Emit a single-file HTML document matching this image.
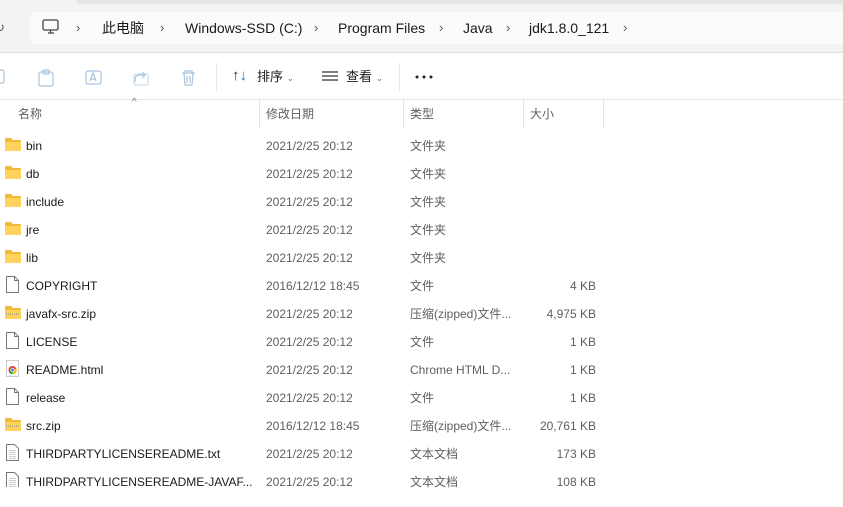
<!DOCTYPE html>
<html><head><meta charset="utf-8"><style>
*{margin:0;padding:0;box-sizing:border-box}
body{width:843px;height:507px;overflow:hidden;background:#fff;font-family:"Liberation Sans","Noto Sans CJK SC",sans-serif;position:relative;color:#1a1a1a}
.top{position:absolute;left:0;top:0;width:843px;height:53px;background:#f3f3f3;border-bottom:1px solid #e0e0e0}
.tab{position:absolute;left:76px;top:0;width:767px;height:4px;background:#e6e6e6;border-radius:0 0 0 4px}
.addr{position:absolute;left:30px;top:12px;width:830px;height:32px;background:#fbfbfb;border-radius:5px}
.t{position:absolute;white-space:nowrap;font-size:13px;line-height:16px}
.g{color:#5f5f5f;font-size:12px}
.sep{position:absolute;top:100px;width:1px;height:27px;background:#e5e5e5}
.tb{position:absolute;left:0;top:53px;width:843px;height:47px;border-bottom:1px solid #e5e5e5}
.vs{position:absolute;top:63px;width:1px;height:28px;background:#e5e5e5}
.row .t{font-size:12px}
</style></head><body>
<div class="top"><div class="tab"></div><div class="addr"></div></div>
<div class="t" style="left:-6px;top:20px;color:#555">↻</div>
<svg style="position:absolute;left:42px;top:19px" width="18" height="16" viewBox="0 0 18 16"><rect x="1" y="1" width="15" height="10" rx="1.5" fill="none" stroke="#444" stroke-width="1.3"/><path d="M6 14h6M8.5 11v3" stroke="#444" stroke-width="1.3"/></svg>
<div class="t" style="left:76px;top:20px;color:#555">›</div>
<div class="t" style="left:102px;top:20px;font-size:14px">此电脑</div>
<div class="t" style="left:160px;top:20px;color:#555">›</div>
<div class="t" style="left:185px;top:20px;font-size:14px">Windows-SSD (C:)</div>
<div class="t" style="left:314px;top:20px;color:#555">›</div>
<div class="t" style="left:338px;top:20px;font-size:14px">Program Files</div>
<div class="t" style="left:439px;top:20px;color:#555">›</div>
<div class="t" style="left:463px;top:20px;font-size:14px">Java</div>
<div class="t" style="left:506px;top:20px;color:#555">›</div>
<div class="t" style="left:529px;top:20px;font-size:14px">jdk1.8.0_121</div>
<div class="t" style="left:623px;top:20px;color:#555">›</div>
<div class="tb"></div>
<svg style="position:absolute;left:0;top:68px" width="200" height="20" viewBox="0 0 200 20" fill="none" stroke="#a9c4de" stroke-width="1.2">
<rect x="-6" y="2" width="10" height="13" rx="2"/>
<rect x="39" y="4" width="14" height="14" rx="2"/><rect x="43" y="2" width="6" height="4" rx="1"/>
<rect x="86" y="3" width="15" height="13" rx="2"/><path d="M90 13l3-8 3 8M91 11h4"/>
<path d="M135 14v-3a4 4 0 0 1 4-4h6M142 4l3 3-3 3"/><rect x="134" y="6" width="14" height="11" rx="2" stroke-opacity=".6"/>
<path d="M182 5h13M185 5v-2h7v2M184 5l1 12h7l1-12M187 8v7M190 8v7"/></svg>
<div class="vs" style="left:216px"></div>
<div class="t" style="left:232px;top:68px;font-size:15px;color:#333">↑<span style="color:#1e6fc6">↓</span></div>
<div class="t" style="left:257px;top:69px">排序 <span style="font-size:9px;color:#777">⌄</span></div>
<svg style="position:absolute;left:322px;top:71px" width="16" height="12"><path d="M0 1h16M0 5h16M0 9h16" stroke="#333" stroke-width="1.2"/></svg>
<div class="t" style="left:346px;top:69px">查看 <span style="font-size:9px;color:#777">⌄</span></div>
<div class="vs" style="left:399px"></div>
<svg style="position:absolute;left:415px;top:75px" width="20" height="4"><circle cx="2" cy="2" r="1.5" fill="#222"/><circle cx="9" cy="2" r="1.5" fill="#222"/><circle cx="16" cy="2" r="1.5" fill="#222"/></svg>
<div class="t" style="left:132px;top:95px;font-size:10px;color:#777">^</div>
<div class="t g" style="left:18px;top:106px">名称</div>
<div class="sep" style="left:259px"></div>
<div class="t g" style="left:266px;top:106px">修改日期</div>
<div class="sep" style="left:403px"></div>
<div class="t g" style="left:410px;top:106px">类型</div>
<div class="sep" style="left:523px"></div>
<div class="t g" style="left:530px;top:106px">大小</div>
<div class="sep" style="left:603px"></div>
<svg width="0" height="0" style="position:absolute"><defs>
<g id="fo"><path d="M0 2a1 1 0 0 1 1-1h5l2 2h7a1 1 0 0 1 1 1v9a1 1 0 0 1-1 1H1a1 1 0 0 1-1-1z" fill="#f0b93a"/><path d="M0 5h16v8a1 1 0 0 1-1 1H1a1 1 0 0 1-1-1z" fill="#ffd35c"/></g>
<g id="fi"><path d="M1.5 .5h8l4 4v12h-12z" fill="#fff" stroke="#777"/><path d="M9.5 .5v4h4" fill="none" stroke="#777"/></g>
<g id="tx"><path d="M1.5 .5h8l4 4v12h-12z" fill="#fff" stroke="#777"/><path d="M4 6.5h7M4 8.5h7M4 10.5h7M4 12.5h7M4 14.5h7" stroke="#999" stroke-width=".6"/></g>
<g id="zp"><use href="#fo"/><path d="M1 9h14" stroke="#888" stroke-dasharray="1 1"/></g>
<g id="ch"><rect x="1.5" y=".5" width="12" height="16" fill="#fff" stroke="#ccc"/><circle cx="7.5" cy="10" r="4" fill="#db4437"/><path d="M7.5 10l4-1.5a4 4 0 0 1-4 5.5z" fill="#f4c20d"/><path d="M7.5 10l-3.5 2a4 4 0 0 0 3.5 2z" fill="#0f9d58"/><circle cx="7.5" cy="10" r="1.8" fill="#4285f4" stroke="#fff" stroke-width=".7"/></g>
</defs></svg>
<div class="row">
<svg style="position:absolute;left:5px;top:137px" width="17" height="350">
<use href="#fo" y="0"/><use href="#fo" y="28"/><use href="#fo" y="56"/><use href="#fo" y="84"/><use href="#fo" y="112"/>
<use href="#fi" y="139"/><use href="#zp" y="168"/><use href="#fi" y="195"/><use href="#ch" y="223"/><use href="#fi" y="251"/><use href="#zp" y="280"/><use href="#tx" y="307"/><use href="#tx" y="335"/>
</svg>
<div class="t" style="left:26px;top:138px">bin</div><div class="t g" style="left:266px;top:138px">2021/2/25 20:12</div><div class="t g" style="left:410px;top:138px">文件夹</div>
<div class="t" style="left:26px;top:166px">db</div><div class="t g" style="left:266px;top:166px">2021/2/25 20:12</div><div class="t g" style="left:410px;top:166px">文件夹</div>
<div class="t" style="left:26px;top:194px">include</div><div class="t g" style="left:266px;top:194px">2021/2/25 20:12</div><div class="t g" style="left:410px;top:194px">文件夹</div>
<div class="t" style="left:26px;top:222px">jre</div><div class="t g" style="left:266px;top:222px">2021/2/25 20:12</div><div class="t g" style="left:410px;top:222px">文件夹</div>
<div class="t" style="left:26px;top:250px">lib</div><div class="t g" style="left:266px;top:250px">2021/2/25 20:12</div><div class="t g" style="left:410px;top:250px">文件夹</div>
<div class="t" style="left:26px;top:278px">COPYRIGHT</div><div class="t g" style="left:266px;top:278px">2016/12/12 18:45</div><div class="t g" style="left:410px;top:278px">文件</div><div class="t g" style="right:247px;top:278px">4 KB</div>
<div class="t" style="left:26px;top:306px">javafx-src.zip</div><div class="t g" style="left:266px;top:306px">2021/2/25 20:12</div><div class="t g" style="left:410px;top:306px">压缩(zipped)文件...</div><div class="t g" style="right:247px;top:306px">4,975 KB</div>
<div class="t" style="left:26px;top:334px">LICENSE</div><div class="t g" style="left:266px;top:334px">2021/2/25 20:12</div><div class="t g" style="left:410px;top:334px">文件</div><div class="t g" style="right:247px;top:334px">1 KB</div>
<div class="t" style="left:26px;top:362px">README.html</div><div class="t g" style="left:266px;top:362px">2021/2/25 20:12</div><div class="t g" style="left:410px;top:362px">Chrome HTML D...</div><div class="t g" style="right:247px;top:362px">1 KB</div>
<div class="t" style="left:26px;top:390px">release</div><div class="t g" style="left:266px;top:390px">2021/2/25 20:12</div><div class="t g" style="left:410px;top:390px">文件</div><div class="t g" style="right:247px;top:390px">1 KB</div>
<div class="t" style="left:26px;top:418px">src.zip</div><div class="t g" style="left:266px;top:418px">2016/12/12 18:45</div><div class="t g" style="left:410px;top:418px">压缩(zipped)文件...</div><div class="t g" style="right:247px;top:418px">20,761 KB</div>
<div class="t" style="left:26px;top:446px">THIRDPARTYLICENSEREADME.txt</div><div class="t g" style="left:266px;top:446px">2021/2/25 20:12</div><div class="t g" style="left:410px;top:446px">文本文档</div><div class="t g" style="right:247px;top:446px">173 KB</div>
<div class="t" style="left:26px;top:474px;width:228px;overflow:hidden">THIRDPARTYLICENSEREADME-JAVAF...</div><div class="t g" style="left:266px;top:474px">2021/2/25 20:12</div><div class="t g" style="left:410px;top:474px">文本文档</div><div class="t g" style="right:247px;top:474px">108 KB</div>
</div>
</body></html>
